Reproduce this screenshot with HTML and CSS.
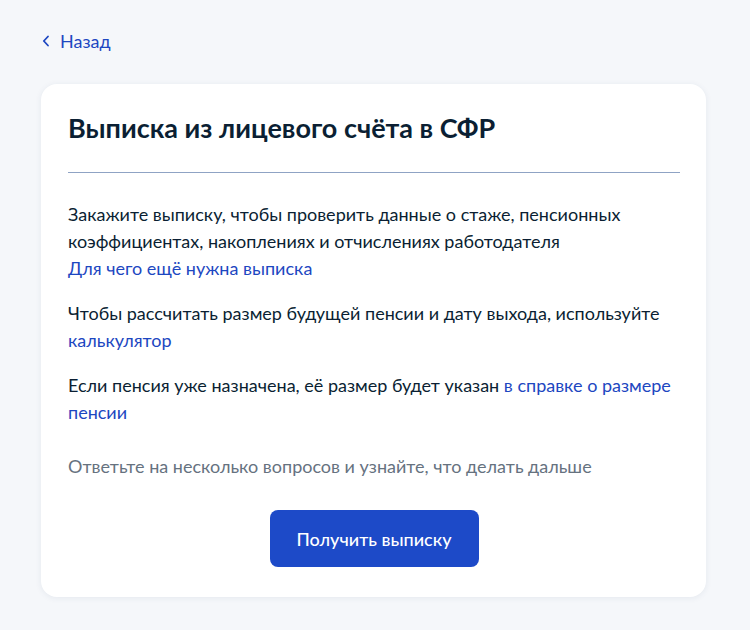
FILE: index.html
```html
<!DOCTYPE html>
<html lang="ru">
<head>
<meta charset="utf-8">
<title>Выписка из лицевого счёта в СФР</title>
<link rel="stylesheet" href="styles.css">
</head>
<body>
<main class="page">
  <a class="back" href="#">
    <svg class="back-icon" width="8" height="12" viewBox="0 0 8 12" aria-hidden="true">
      <path d="M6 1.5 1.8 6 6 10.5" fill="none" stroke="currentColor" stroke-width="1.8" stroke-linecap="round" stroke-linejoin="round"/>
    </svg>
    <span>Назад</span>
  </a>
  <section class="card">
    <h1 class="title">Выписка из лицевого счёта в СФР</h1>
    <hr class="divider">
    <p class="text">Закажите выписку, чтобы проверить данные о стаже, пенсионных коэффициентах, накоплениях и отчислениях работодателя<br><a class="link" href="#">Для чего ещё нужна выписка</a></p>
    <p class="text">Чтобы рассчитать размер будущей пенсии и дату выхода, используйте <a class="link" href="#">калькулятор</a></p>
    <p class="text">Если пенсия уже назначена, её размер будет указан <a class="link" href="#">в справке о размере пенсии</a></p>
    <p class="text hint">Ответьте на несколько вопросов и узнайте, что делать дальше</p>
    <div class="actions">
      <button class="btn" type="button">Получить выписку</button>
    </div>
  </section>
</main>
</body>
</html>
```
FILE: styles.css
```css
* { box-sizing: border-box; }

html, body {
  margin: 0;
  padding: 0;
  background: #f5f7fa;
}

body {
  font-family: Lato, "Noto Sans", sans-serif;
  color: #0b1f33;
  -webkit-font-smoothing: antialiased;
}

.page {
  padding: 28px 44px 34px 41px;
}

.back {
  display: inline-flex;
  align-items: center;
  gap: 10px;
  margin-left: 1px;
  height: 26px;
  color: #1d47c1;
  text-decoration: none;
  font-size: 18px;
  line-height: 26px;
}

.back-icon { display: block; }

.card {
  margin-top: 30px;
  background: #fff;
  border-radius: 16px;
  box-shadow: 0 1px 6px rgba(44, 62, 104, 0.08);
  padding: 28px 26px 30px 27px;
}

.title {
  margin: 0;
  font-size: 27px;
  line-height: 32px;
  font-weight: 700;
  color: #0b1f33;
}

.divider {
  margin: 28px 0 28px;
  border: 0;
  height: 1px;
  background: #8fa3c4;
}

.text {
  margin: 0 0 18px;
  font-size: 18px;
  line-height: 27px;
}

.link {
  color: #1d47c1;
  text-decoration: none;
}

.hint {
  margin-top: 27px;
  margin-bottom: 30px;
  color: #66727f;
}

.actions {
  display: flex;
  justify-content: center;
}

.btn {
  width: 209px;
  height: 57px;
  border: 0;
  border-radius: 8px;
  background: #1d4ac8;
  color: #fff;
  font-family: inherit;
  font-size: 18px;
  font-weight: 500;
  cursor: pointer;
}
```
